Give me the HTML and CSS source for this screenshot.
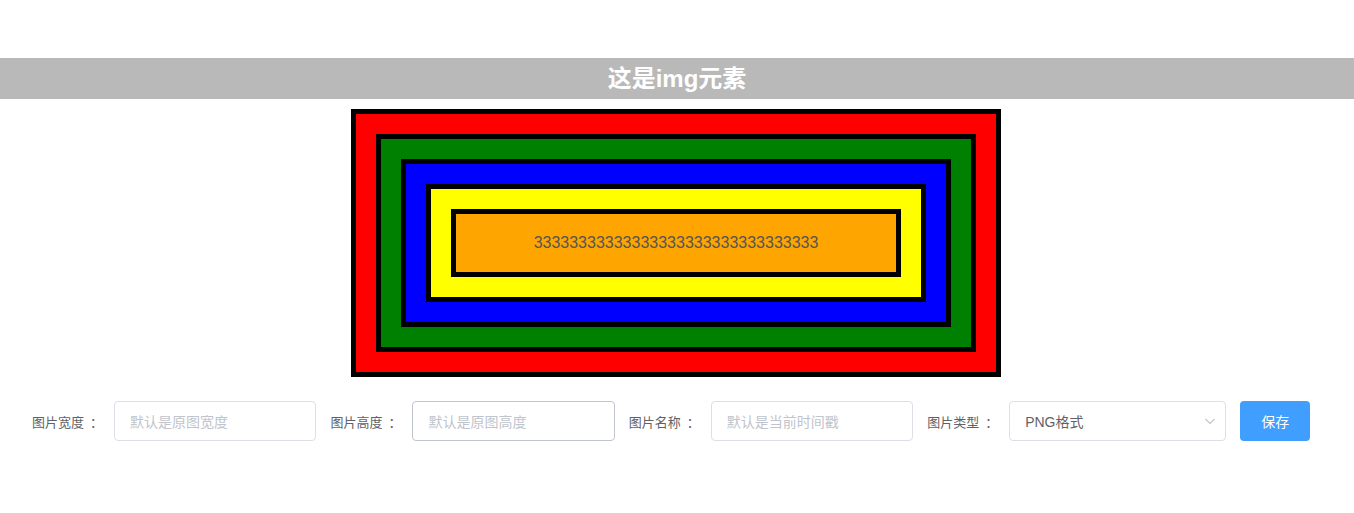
FILE: index.html
```html
<!DOCTYPE html>
<html lang="zh-CN">
<head>
<meta charset="utf-8">
<title>img</title>
<link rel="stylesheet" href="styles.css">
</head>
<body>
<div class="page">
  <h2 class="title">这是img元素</h2>
  <div class="stage">
    <div class="lvl red">
      <div class="lvl green">
        <div class="lvl blue">
          <div class="lvl yellow">
            <div class="core">33333333333333333333333333333333</div>
          </div>
        </div>
      </div>
    </div>
  </div>
  <form class="form">
    <div class="item">
      <label class="label">图片宽度<span class="colon">：</span></label>
      <div class="input"><span class="ph">默认是原图宽度</span></div>
    </div>
    <div class="item">
      <label class="label">图片高度<span class="colon">：</span></label>
      <div class="input hover"><span class="ph">默认是原图高度</span></div>
    </div>
    <div class="item">
      <label class="label">图片名称<span class="colon">：</span></label>
      <div class="input"><span class="ph">默认是当前时间戳</span></div>
    </div>
    <div class="item">
      <label class="label">图片类型<span class="colon">：</span></label>
      <div class="input select"><span class="val">PNG格式</span>
        <svg class="arrow" width="14" height="14" viewBox="0 0 14 14"><path d="M2.5 5 L7 9.5 L11.5 5" fill="none" stroke="#c0c4cc" stroke-width="1.1"/></svg>
      </div>
    </div>
    <button type="button" class="btn">保存</button>
  </form>
</div>
</body>
</html>
```
FILE: styles.css
```css
html, body {
  margin: 0;
  padding: 0;
  background: #fff;
}
body {
  font-family: "Liberation Sans", Arial, "Noto Sans CJK SC", sans-serif;
}
.page {
  padding-top: 58px;
}
.title {
  margin: 0;
  height: 41px;
  line-height: 41px;
  background: #b9b9b9;
  color: #fff;
  font-size: 24px;
  font-weight: bold;
  text-align: center;
}
.stage {
  display: flex;
  justify-content: center;
  padding-top: 10px;
  padding-right: 2px;
}
.lvl {
  border: 5px solid #000;
  padding: 20px;
}
.red { background: #ff0000; }
.green { background: #008000; }
.blue { background: #0000ff; }
.yellow { background: #ffff00; }
.core {
  border: 5px solid #000;
  background: #ffa500;
  width: 440px;
  height: 58px;
  display: flex;
  align-items: center;
  justify-content: center;
  color: #555;
  font-size: 16px;
}
.form {
  display: flex;
  align-items: center;
  margin-top: 24px;
  padding-left: 32px;
}
.item {
  display: flex;
  align-items: center;
  margin-right: 14px;
}
.label {
  width: 70px;
  margin-right: 12px;
  font-size: 13px;
  color: #606266;
  white-space: nowrap;
}
.colon {
  display: inline-block;
  padding-left: 6px;
}
.input {
  box-sizing: border-box;
  width: 202.4px;
  height: 40px;
  border: 1px solid #dcdfe6;
  border-radius: 4px;
  padding: 0 15px;
  display: flex;
  align-items: center;
  font-size: 14px;
}
.input.hover { border-color: #c0c4cc; }
.ph { color: #c0c4cc; }
.select {
  width: 217px;
  justify-content: space-between;
  padding-right: 8px;
}
.val { color: #606266; }
.arrow { display: block; }
.btn {
  width: 70px;
  height: 40px;
  border: none;
  border-radius: 4px;
  background: #409eff;
  color: #fff;
  font-size: 14px;
  font-family: inherit;
  padding: 0;
}
```
